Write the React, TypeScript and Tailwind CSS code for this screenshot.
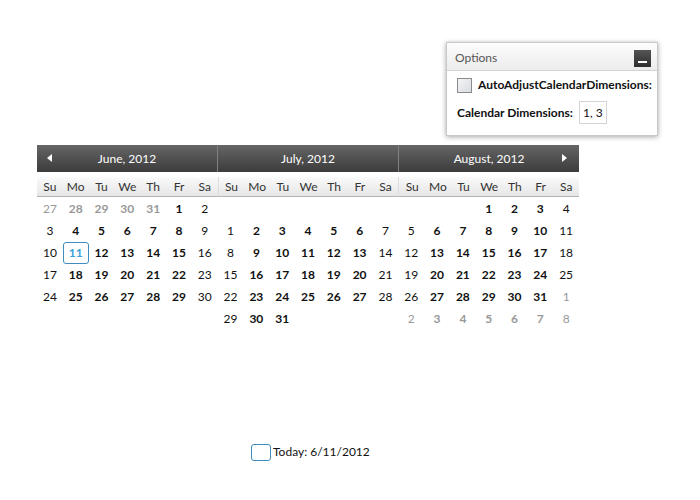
import { useState } from "react";

type Day = { n: number; other?: boolean };

const dayNames = ["Su", "Mo", "Tu", "We", "Th", "Fr", "Sa"];

function buildMonth(year: number, month: number, lead: boolean): Day[] {
  const first = new Date(year, month, 1).getDay();
  const days = new Date(year, month + 1, 0).getDate();
  const prevDays = new Date(year, month, 0).getDate();
  const cells: Day[] = [];
  if (lead) for (let i = first - 1; i >= 0; i--) cells.push({ n: prevDays - i, other: true });
  else for (let i = 0; i < first; i++) cells.push({ n: 0 });
  for (let d = 1; d <= days; d++) cells.push({ n: d });
  return cells;
}

const blankRow: Day[] = Array.from({ length: 7 }, () => ({ n: 0 }));

const months = [
  { label: "June, 2012", cells: buildMonth(2012, 5, true) },
  { label: "July, 2012", cells: [...blankRow, ...buildMonth(2012, 6, false)] },
  {
    label: "August, 2012",
    cells: [...buildMonth(2012, 7, false), ...[1, 2, 3, 4, 5, 6, 7, 8].map((n) => ({ n, other: true }))],
  },
];

function MonthGrid({ cells, first }: { cells: Day[]; first: boolean }) {
  const rows: Day[][] = [];
  for (let i = 0; i < cells.length; i += 7) rows.push(cells.slice(i, i + 7));
  return (
    <div className="flex-1">
      <div
        className={
          "grid grid-cols-7 h-[20px] items-center bg-gradient-to-b from-[#fafafa] to-[#e6e6e6] border-b border-[#b4b4b4] text-[#333]" +
          (first ? "" : " border-l border-l-[#d8dde3]")
        }
      >
        {dayNames.map((d) => (
          <div key={d} className="text-center leading-none">
            {d}
          </div>
        ))}
      </div>
      <div className="pt-[1px]">
        {rows.map((row, r) => (
          <div key={r} className="grid grid-cols-7 h-[22px]">
            {row.map((c, i) => {
              if (!c.n) return <div key={i} />;
              const weekend = i === 0 || i === 6;
              const selected = first && !c.other && c.n === 11;
              return (
                <div key={i} className="flex items-center justify-center">
                  <div
                    className={
                      "w-[26px] h-[22px] flex items-center justify-center rounded-[3px] " +
                      (selected ? "border border-[#3e8cc0] text-[#3ba2dc] " : "") +
                      (c.other ? "text-[#999] " : selected ? "" : "text-[#111] ") +
                      (weekend ? "font-normal" : "font-bold")
                    }
                  >
                    {c.n}
                  </div>
                </div>
              );
            })}
          </div>
        ))}
      </div>
    </div>
  );
}

export default function App() {
  const [auto, setAuto] = useState(false);
  return (
    <div
      className="w-[700px] h-[500px] bg-white text-[12px] overflow-hidden"
      style={{ fontFamily: 'Lato, "Noto Sans", sans-serif' }}
    >
      <div className="pt-[42px] pl-[446px]">
        <div className="w-[212px] h-[94px] bg-white border border-[#c8c8c8] shadow-[0_1px_5px_rgba(0,0,0,0.35)]">
          <div className="h-[28px] flex items-center justify-between pl-[8px] pr-[6px] pt-[3px] bg-gradient-to-b from-[#fdfdfd] to-[#ececec] border-b border-[#d2d2d2]">
            <span className="text-[#555] text-[12px]">Options</span>
            <button className="w-[17px] h-[17px] bg-gradient-to-b from-[#555] to-[#2e2e2e] flex items-end justify-center pb-[4px]">
              <span className="block w-[9px] h-[2px] bg-white" />
            </button>
          </div>
          <div className="pl-[10px] pt-[6px]">
            <label className="flex items-center gap-[6px] h-[16px]">
              <span
                onClick={() => setAuto(!auto)}
                className="shrink-0 w-[15px] h-[15px] border border-[#8a8a8a] bg-gradient-to-br from-[#f4f4f4] to-[#d9dde3]"
              />
              <span className="font-bold text-[#111] whitespace-nowrap">AutoAdjustCalendarDimensions:</span>
            </label>
            <div className="flex items-center gap-[6px] mt-[8px]">
              <span className="font-bold text-[#111]">Calendar Dimensions:</span>
              <span className="w-[28px] h-[23px] border border-[#d4d4d4] flex items-center justify-center text-[#111]">
                1, 3
              </span>
            </div>
          </div>
        </div>
      </div>

      <div className="mt-[9px] ml-[37px] w-[542px]">
        <div className="flex h-[27px] bg-gradient-to-b from-[#666] to-[#3c3c3c] text-white">
          {months.map((m, i) => (
            <div
              key={m.label}
              className={
                "flex-1 flex items-center justify-center relative" +
                (i > 0 ? " border-l border-l-[#808080]" : "")
              }
            >
              {i === 0 && (
                <span className="absolute left-[10px] top-[9px] w-0 h-0 border-y-[4px] border-y-transparent border-r-[5px] border-r-white" />
              )}
              <span>{m.label}</span>
              {i === 2 && (
                <span className="absolute right-[12px] top-[9px] w-0 h-0 border-y-[4px] border-y-transparent border-l-[5px] border-l-white" />
              )}
            </div>
          ))}
        </div>
        <div className="flex mt-[5px]">
          {months.map((m, i) => (
            <MonthGrid key={m.label} cells={m.cells} first={i === 0} />
          ))}
        </div>
      </div>

      <div className="mt-[113px] ml-[251px] flex items-center gap-[2px]">
        <button className="w-[20px] h-[17px] border border-[#3e8cc0] rounded-[3px]" />
        <span className="text-[#111]">Today: 6/11/2012</span>
      </div>
    </div>
  );
}
